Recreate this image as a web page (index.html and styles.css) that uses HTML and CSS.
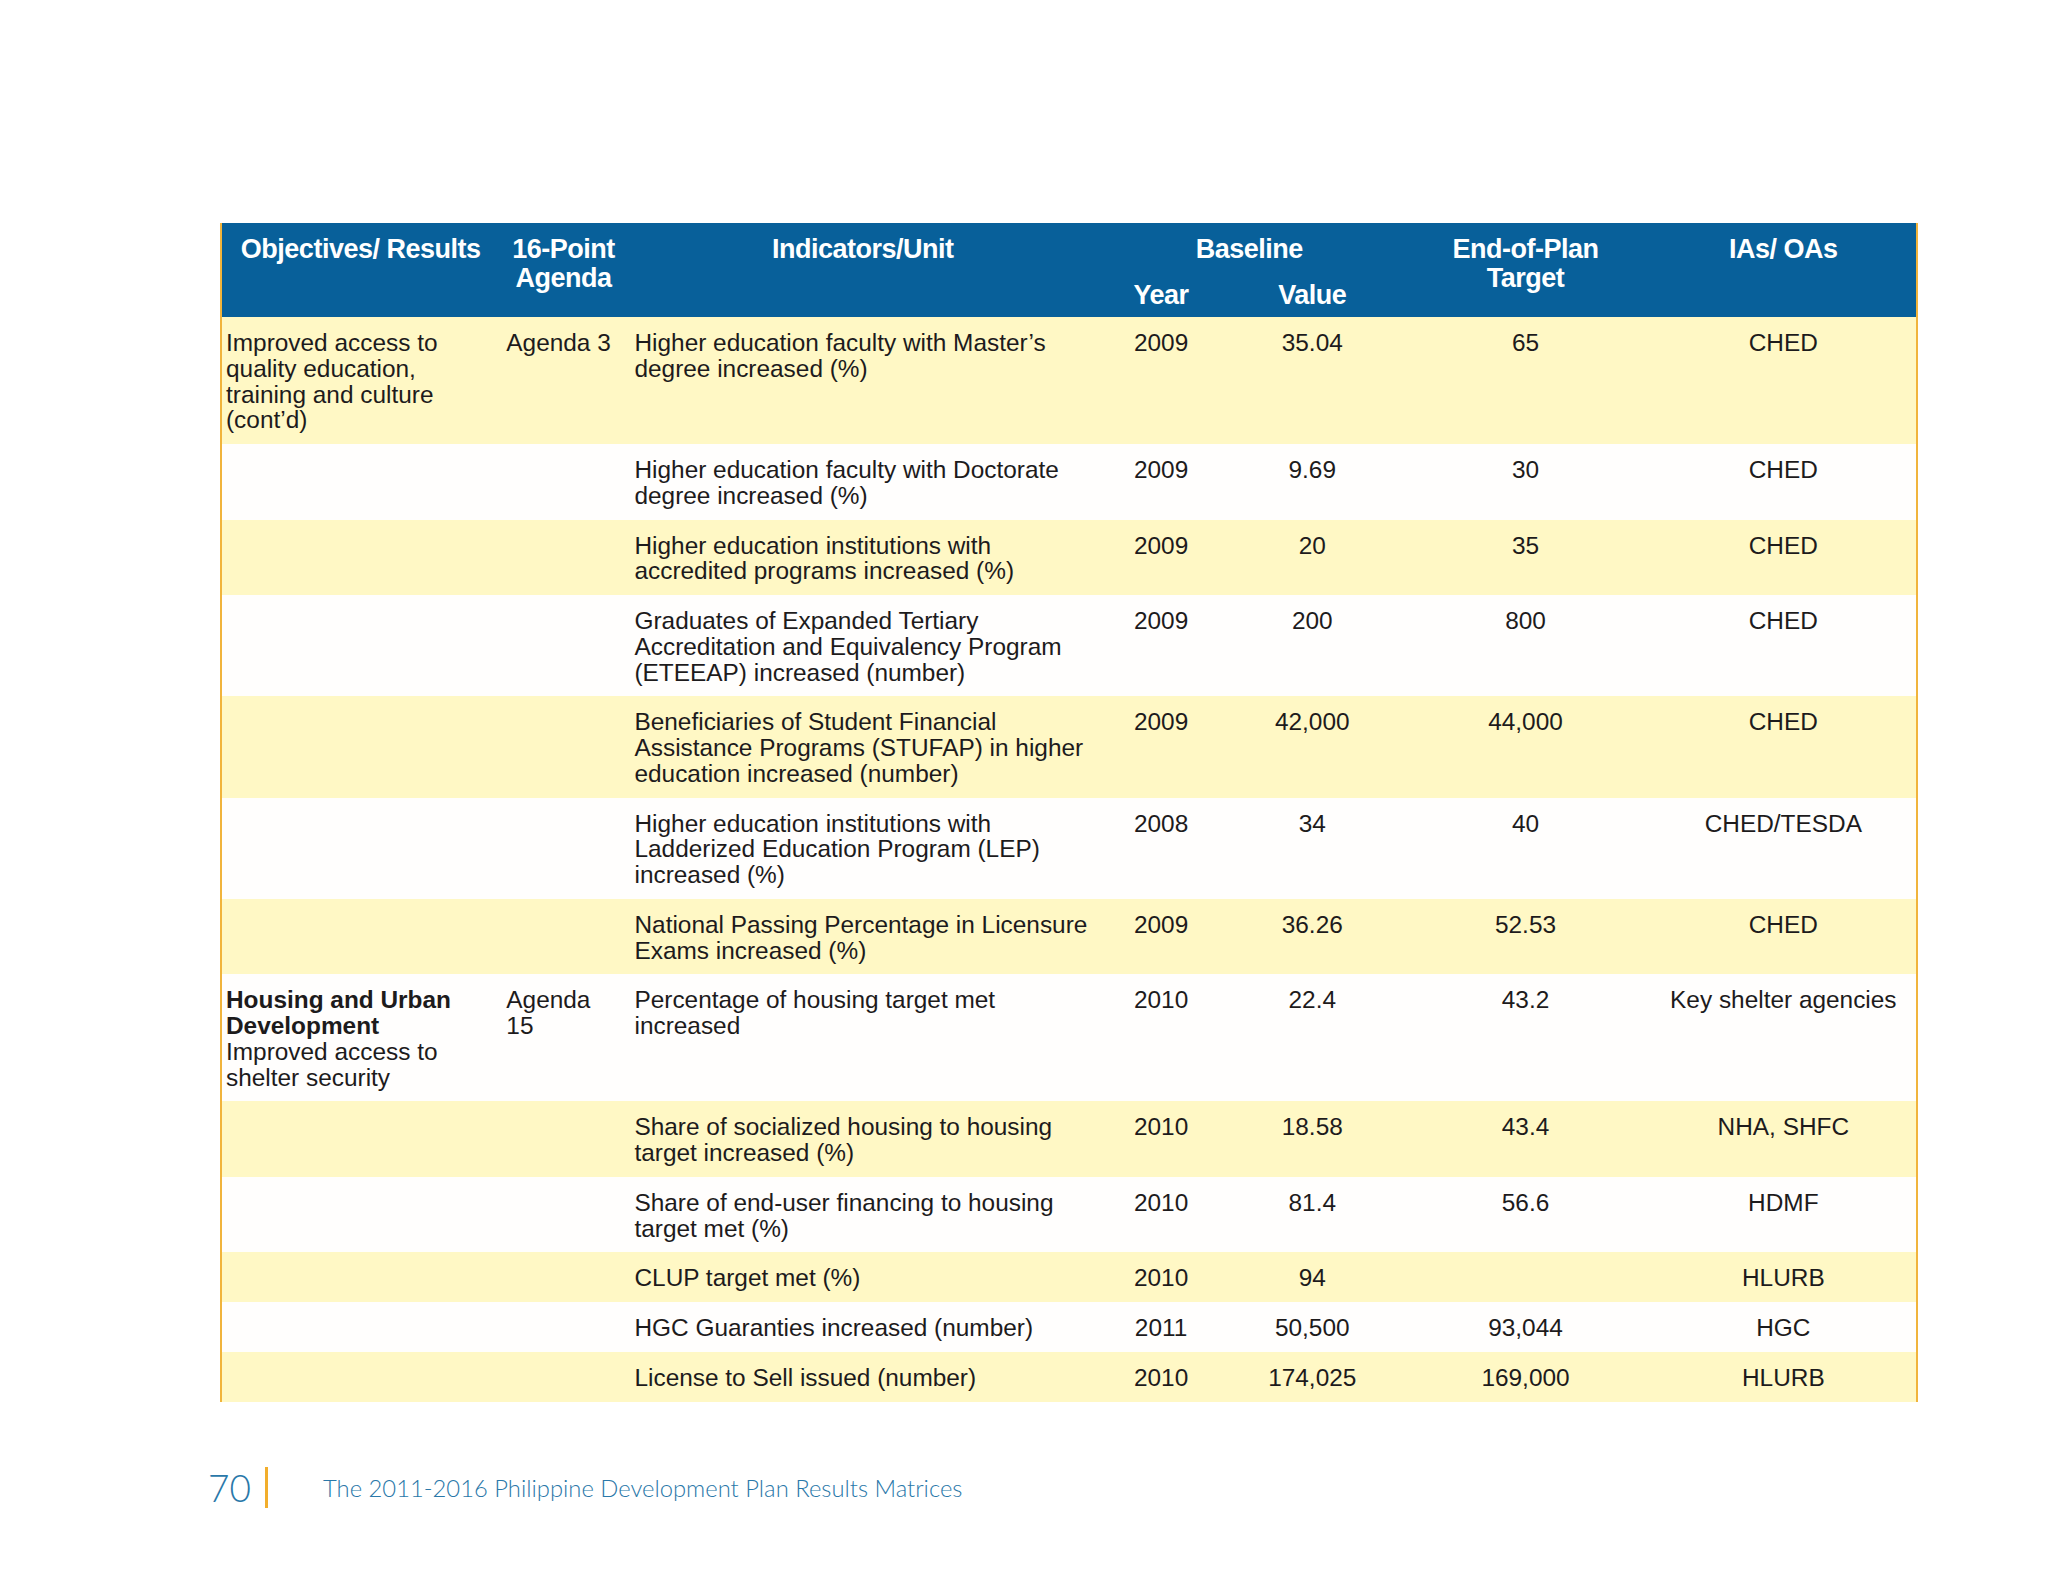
FILE: index.html
```html
<!DOCTYPE html>
<html lang="en">
<head>
<meta charset="utf-8">
<title>Results Matrix</title>
<link rel="stylesheet" href="styles.css">
</head>
<body>
<div class="page">
  <table class="matrix">
    <colgroup>
      <col class="c-obj"><col class="c-agenda"><col class="c-ind"><col class="c-year"><col class="c-value"><col class="c-target"><col class="c-ias">
    </colgroup>
    <thead>
      <tr class="h1">
        <th rowspan="2">Objectives/ Results</th>
        <th rowspan="2">16-Point<br>Agenda</th>
        <th rowspan="2">Indicators/Unit</th>
        <th colspan="2">Baseline</th>
        <th rowspan="2">End-of-Plan<br>Target</th>
        <th rowspan="2">IAs/ OAs</th>
      </tr>
      <tr class="h2">
        <th>Year</th>
        <th>Value</th>
      </tr>
    </thead>
    <tbody>
      <tr class="y">
        <td class="obj">Improved access to<br>quality education,<br>training and culture<br>(cont’d)</td>
        <td class="ag">Agenda 3</td>
        <td class="ind">Higher education faculty with Master’s<br>degree increased (%)</td>
        <td class="num">2009</td><td class="num">35.04</td><td class="num">65</td><td class="num">CHED</td>
      </tr>
      <tr class="w">
        <td class="obj"></td><td class="ag"></td>
        <td class="ind">Higher education faculty with Doctorate<br>degree increased (%)</td>
        <td class="num">2009</td><td class="num">9.69</td><td class="num">30</td><td class="num">CHED</td>
      </tr>
      <tr class="y">
        <td class="obj"></td><td class="ag"></td>
        <td class="ind">Higher education institutions with<br>accredited programs increased (%)</td>
        <td class="num">2009</td><td class="num">20</td><td class="num">35</td><td class="num">CHED</td>
      </tr>
      <tr class="w">
        <td class="obj"></td><td class="ag"></td>
        <td class="ind">Graduates of Expanded Tertiary<br>Accreditation and Equivalency Program<br>(ETEEAP) increased (number)</td>
        <td class="num">2009</td><td class="num">200</td><td class="num">800</td><td class="num">CHED</td>
      </tr>
      <tr class="y">
        <td class="obj"></td><td class="ag"></td>
        <td class="ind">Beneficiaries of Student Financial<br>Assistance Programs (STUFAP) in higher<br>education increased (number)</td>
        <td class="num">2009</td><td class="num">42,000</td><td class="num">44,000</td><td class="num">CHED</td>
      </tr>
      <tr class="w">
        <td class="obj"></td><td class="ag"></td>
        <td class="ind">Higher education institutions with<br>Ladderized Education Program (LEP)<br>increased (%)</td>
        <td class="num">2008</td><td class="num">34</td><td class="num">40</td><td class="num">CHED/TESDA</td>
      </tr>
      <tr class="y">
        <td class="obj"></td><td class="ag"></td>
        <td class="ind">National Passing Percentage in Licensure<br>Exams increased (%)</td>
        <td class="num">2009</td><td class="num">36.26</td><td class="num">52.53</td><td class="num">CHED</td>
      </tr>
      <tr class="w">
        <td class="obj"><strong>Housing and Urban<br>Development</strong><br>Improved access to<br>shelter security</td>
        <td class="ag">Agenda<br>15</td>
        <td class="ind">Percentage of housing target met<br>increased</td>
        <td class="num">2010</td><td class="num">22.4</td><td class="num">43.2</td><td class="num">Key shelter agencies</td>
      </tr>
      <tr class="y">
        <td class="obj"></td><td class="ag"></td>
        <td class="ind">Share of socialized housing to housing<br>target increased (%)</td>
        <td class="num">2010</td><td class="num">18.58</td><td class="num">43.4</td><td class="num">NHA, SHFC</td>
      </tr>
      <tr class="w">
        <td class="obj"></td><td class="ag"></td>
        <td class="ind">Share of end-user financing to housing<br>target met (%)</td>
        <td class="num">2010</td><td class="num">81.4</td><td class="num">56.6</td><td class="num">HDMF</td>
      </tr>
      <tr class="y">
        <td class="obj"></td><td class="ag"></td>
        <td class="ind">CLUP target met (%)</td>
        <td class="num">2010</td><td class="num">94</td><td class="num"></td><td class="num">HLURB</td>
      </tr>
      <tr class="w">
        <td class="obj"></td><td class="ag"></td>
        <td class="ind">HGC Guaranties increased (number)</td>
        <td class="num">2011</td><td class="num">50,500</td><td class="num">93,044</td><td class="num">HGC</td>
      </tr>
      <tr class="y">
        <td class="obj"></td><td class="ag"></td>
        <td class="ind">License to Sell issued (number)</td>
        <td class="num">2010</td><td class="num">174,025</td><td class="num">169,000</td><td class="num">HLURB</td>
      </tr>
    </tbody>
  </table>

  <footer class="foot">
    <span class="pageno">70</span>
    <span class="bar"></span>
    <span class="title">The 2011-2016 Philippine Development Plan Results Matrices</span>
  </footer>
</div>
</body>
</html>
```

FILE: styles.css
```css
html, body {
  margin: 0;
  padding: 0;
  background: #ffffff;
}

.page {
  padding: 223px 0 0 220px;
  width: 1698px;
}

.matrix {
  border-collapse: collapse;
  table-layout: fixed;
  width: 1698px;
  border-left: 2px solid #f1b43c;
  border-right: 2px solid #f1b43c;
  font-family: "Liberation Sans", Arial, sans-serif;
  color: #1d1b1c;
}

.c-obj { width: 278px; }
.c-agenda { width: 128px; }
.c-ind { width: 470px; }
.c-year { width: 126px; }
.c-value { width: 176px; }
.c-target { width: 250px; }
.c-ias { width: 266px; }

.matrix thead th {
  background: #08609a;
  color: #ffffff;
  font-family: "Liberation Sans", Arial, sans-serif;
  font-weight: bold;
  font-size: 27px;
  letter-spacing: -0.5px;
  line-height: 29px;
  text-align: center;
  vertical-align: top;
  white-space: nowrap;
  padding: 12px 4px 0;
}

.matrix thead tr.h1 { height: 41px; }
.matrix thead tr.h2 { height: 53px; }

.matrix thead tr.h2 th {
  padding: 17px 4px 7px;
}

.matrix td {
  font-size: 24.4px;
  line-height: 25.75px;
  vertical-align: top;
  padding: 13px 7px 11px;
  white-space: nowrap;
}

.matrix tr.y td { background: #fff8c5; }
.matrix tr.w td { background: #fffefd; }

.matrix td.obj { padding-left: 4px; }
.matrix td.num { text-align: center; }

.matrix td strong { font-weight: bold; }

.foot {
  display: flex;
  align-items: center;
  margin-top: 65px;
  height: 42px;
  margin-left: -12px;
  font-family: "Lato", "Open Sans", sans-serif;
  color: #2a78a9;
}

.pageno {
  font-size: 37px;
  font-weight: 300;
  line-height: 42px;
  width: 49px;
}

.bar {
  width: 3px;
  height: 41px;
  background: #f2ae2c;
  margin-left: 8px;
}

.title {
  margin-left: 55px;
  font-size: 23.8px;
  font-weight: 300;
  line-height: 30px;
}
```
